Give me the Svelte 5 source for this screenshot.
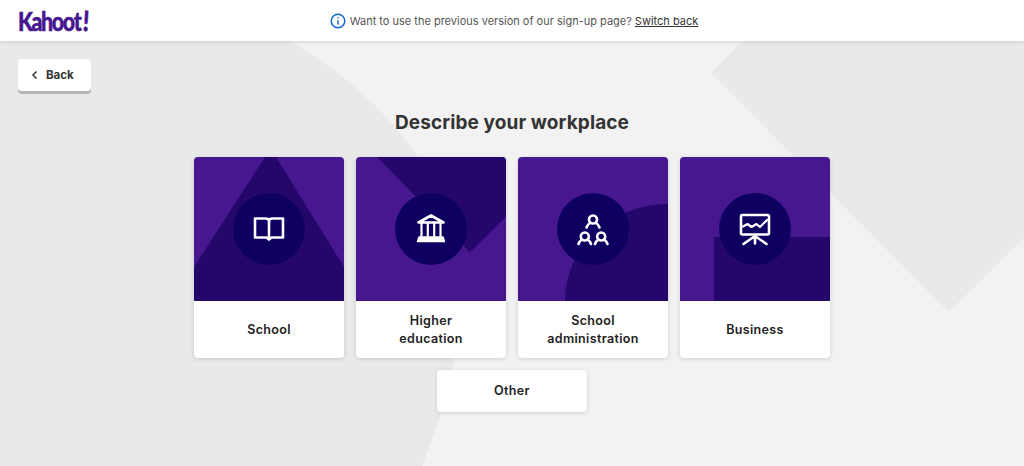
<script lang="ts">
	const cards = [
		{ id: 'school', lines: ['School'], shape: 'M0 110L71 0H82L150 110V144H0Z' },
		{ id: 'higher', lines: ['Higher', 'education'], shape: 'M21 0H150V60L114 95Z' },
		{ id: 'admin', lines: ['School', 'administration'], shape: 'M47 144A103 97 0 0 1 150 47V144Z' },
		{ id: 'business', lines: ['Business'], shape: 'M34 80H150V144H34Z' }
	];
</script>

{#snippet icon(id: string)}
	<svg class="icon" viewBox="-20 -20 40 40" aria-hidden="true">
		{#if id === 'school'}
			<path d="M-14 -10.5H-3.5Q0 -10.5 0 -8Q0 -10.5 3.5 -10.5H14V8.5H2.5L0 10.5L-2.5 8.5H-14Z" />
			<path d="M0 -8V10" />
		{:else if id === 'higher'}
			<path d="M-12.5 -6.5L0 -13.5L12.5 -6.5Z" />
			<path class="thin" d="M-9.5 -6.5V7M-3.2 -6.5V7M3.2 -6.5V7M9.5 -6.5V7" />
			<path class="solid" d="M-12 8H12L13.5 12.5H-13.5Z" />
		{:else if id === 'admin'}
			<circle cx="0" cy="-9.5" r="4" />
			<path d="M-6.5 -1.5Q-5.5 -4.5 -3 -6M6.5 -1.5Q5.5 -4.5 3 -6" />
			<circle cx="-8.2" cy="7.5" r="4" />
			<path d="M-14.5 15Q-13.5 12 -11 10.5M-2 15Q-3 12 -5.5 10.5" />
			<circle cx="8.2" cy="7.5" r="4" />
			<path d="M2 15Q3 12 5.5 10.5M14.5 15Q13.5 12 11 10.5" />
		{:else}
			<rect x="-14" y="-14" width="28" height="19.5" rx="1.5" />
			<path class="thin" d="M-12 -2.5L-7.5 -5L-3.5 -2L1.5 -5L5 -2L12 -9" />
			<path d="M0 6V14.5M0 7L-11.5 15M0 7L11.5 15" />
		{/if}
	</svg>
{/snippet}

<div class="page">
	<svg class="backdrop" viewBox="0 0 1024 466" aria-hidden="true">
		<path d="M290 41C340 70 385 110 413 150C445 200 460 265 458 320C456 370 440 420 422 466H0V41Z" />
		<path d="M742 41H1024V238L949 312L711 73Z" />
	</svg>

	<header class="topbar">
		<div class="logo">Kahoot<span class="bang">!</span></div>
		<p class="notice">
			<svg class="info" viewBox="0 0 16 16" aria-hidden="true">
				<circle cx="8" cy="8" r="6.8" />
				<path d="M8 7.2V11.6M8 4.2V5.6" />
			</svg>
			<span>Want to use the previous version of our sign-up page?</span>
			<a href="#switch">Switch back</a>
		</p>
	</header>

	<main class="content">
		<button class="back">
			<svg viewBox="0 0 8 10" aria-hidden="true"><path d="M5.5 1.5L2 5L5.5 8.5" /></svg>
			Back
		</button>

		<h1>Describe your workplace</h1>

		<div class="grid">
			{#each cards as card}
				<button class="card">
					<span class="art">
						<svg class="shape" viewBox="0 0 150 144" aria-hidden="true"><path d={card.shape} /></svg>
						<span class="disc">{@render icon(card.id)}</span>
					</span>
					<span class="label">
						{#each card.lines as line}
							<span>{line}</span>
						{/each}
					</span>
				</button>
			{/each}
		</div>

		<button class="other">Other</button>
	</main>
</div>

<style>
	:global(body) {
		background: #f2f2f2;
		font-family: Inter, 'Liberation Sans', sans-serif;
		overflow: hidden;
	}

	.page {
		position: relative;
		height: 466px;
		overflow: hidden;
	}

	.backdrop {
		position: absolute;
		inset: 0;
		width: 1024px;
		height: 466px;
		fill: #e9e9e9;
	}

	.topbar {
		position: relative;
		display: grid;
		grid-template-columns: 1fr auto 1fr;
		align-items: center;
		height: 41px;
		padding: 0 18px;
		background: #fff;
		box-shadow: 0 1px 4px rgba(0, 0, 0, 0.12);
	}

	.logo {
		font-family: Lato, sans-serif;
		font-weight: 900;
		font-size: 26px;
		line-height: 38px;
		letter-spacing: -1.6px;
		color: #46178f;
		-webkit-text-stroke: 0.5px #46178f;
		transform: scaleX(0.82);
		transform-origin: left center;
	}

	.bang {
		display: inline-block;
		margin-left: 3px;
		font-size: 28px;
		transform: rotate(4deg);
	}

	.notice {
		display: flex;
		align-items: center;
		margin: 0;
		font-size: 11px;
		color: #555;
		white-space: nowrap;
		transform: translateX(2px);
	}

	.notice a {
		margin-left: 3px;
		color: #333;
	}

	.info {
		width: 16px;
		height: 16px;
		margin-right: 4px;
		fill: none;
		stroke: #1368ce;
		stroke-width: 1.5;
	}

	.content {
		position: relative;
		display: flex;
		flex-direction: column;
		align-items: center;
		padding-top: 18px;
	}

	button {
		border: 0;
		padding: 0;
		background: #fff;
		font-family: inherit;
		cursor: pointer;
	}

	.back {
		align-self: flex-start;
		display: flex;
		align-items: center;
		gap: 7px;
		width: 73px;
		height: 32px;
		margin-left: 18px;
		padding-left: 13px;
		border-radius: 4px;
		box-shadow: 0 3px 0 rgba(0, 0, 0, 0.22);
		font-size: 11.5px;
		font-weight: 700;
		color: #333;
	}

	.back svg {
		width: 8px;
		height: 10px;
		fill: none;
		stroke: #333;
		stroke-width: 1.5;
	}

	h1 {
		margin: 20px 0 22px;
		font-size: 19px;
		line-height: 24px;
		font-weight: 700;
		letter-spacing: 0.1px;
		color: #333;
	}

	.grid {
		display: flex;
		gap: 12px;
	}

	.card {
		display: flex;
		flex-direction: column;
		width: 150px;
		height: 201px;
		border-radius: 4px;
		overflow: hidden;
		box-shadow: 0 1px 4px rgba(0, 0, 0, 0.15);
	}

	.art {
		position: relative;
		display: flex;
		align-items: center;
		justify-content: center;
		width: 150px;
		height: 144px;
		background: #46178f;
	}

	.shape {
		position: absolute;
		inset: 0;
		width: 150px;
		height: 144px;
		fill: #25076b;
	}

	.disc {
		position: relative;
		display: flex;
		width: 72px;
		height: 72px;
		border-radius: 50%;
		background: #0e0061;
	}

	.icon {
		width: 40px;
		height: 40px;
		margin: 16px;
		fill: none;
		stroke: #fff;
		stroke-width: 2.6;
		stroke-linejoin: round;
		stroke-linecap: round;
	}

	.thin {
		stroke-width: 2.2;
	}

	.solid {
		fill: #fff;
		stroke-width: 1.5;
	}

	.label {
		flex: 1;
		display: flex;
		flex-direction: column;
		align-items: center;
		justify-content: center;
		font-size: 12.5px;
		line-height: 18px;
		font-weight: 600;
		letter-spacing: 0.35px;
		color: #222;
	}

	.other {
		width: 150px;
		height: 42px;
		margin-top: 12px;
		padding-bottom: 2px;
		border-radius: 4px;
		box-shadow: 0 1px 4px rgba(0, 0, 0, 0.15);
		font-size: 12.5px;
		font-weight: 600;
		letter-spacing: 0.35px;
		color: #222;
	}
</style>
